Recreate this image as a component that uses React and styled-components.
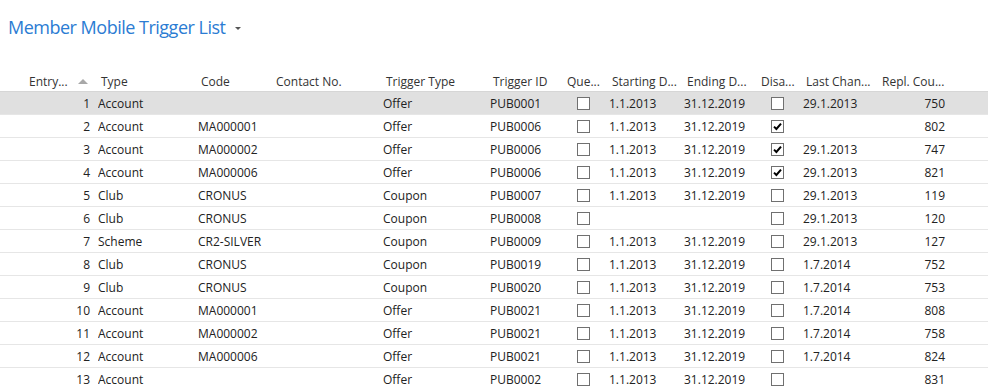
import styled, { createGlobalStyle } from "styled-components";

const GlobalStyle = createGlobalStyle`
  body {
    margin: 0;
    background: #fff;
    font-family: "Open Sans", "Noto Sans", sans-serif;
    color: #222;
  }
`;

const COLUMNS = "98px 100px 75px 110px 107px 74px 45px 75px 74px 45px 76px 70px 1fr";

const rows = [
  [1, "Account", "", "Offer", "PUB0001", "1.1.2013", "31.12.2019", false, "29.1.2013", 750],
  [2, "Account", "MA000001", "Offer", "PUB0006", "1.1.2013", "31.12.2019", true, "", 802],
  [3, "Account", "MA000002", "Offer", "PUB0006", "1.1.2013", "31.12.2019", true, "29.1.2013", 747],
  [4, "Account", "MA000006", "Offer", "PUB0006", "1.1.2013", "31.12.2019", true, "29.1.2013", 821],
  [5, "Club", "CRONUS", "Coupon", "PUB0007", "1.1.2013", "31.12.2019", false, "29.1.2013", 119],
  [6, "Club", "CRONUS", "Coupon", "PUB0008", "", "", false, "29.1.2013", 120],
  [7, "Scheme", "CR2-SILVER", "Coupon", "PUB0009", "1.1.2013", "31.12.2019", false, "29.1.2013", 127],
  [8, "Club", "CRONUS", "Coupon", "PUB0019", "1.1.2013", "31.12.2019", false, "1.7.2014", 752],
  [9, "Club", "CRONUS", "Coupon", "PUB0020", "1.1.2013", "31.12.2019", false, "1.7.2014", 753],
  [10, "Account", "MA000001", "Offer", "PUB0021", "1.1.2013", "31.12.2019", false, "1.7.2014", 808],
  [11, "Account", "MA000002", "Offer", "PUB0021", "1.1.2013", "31.12.2019", false, "1.7.2014", 758],
  [12, "Account", "MA000006", "Offer", "PUB0021", "1.1.2013", "31.12.2019", false, "1.7.2014", 824],
  [13, "Account", "", "Offer", "PUB0002", "1.1.2013", "31.12.2019", false, "", 831],
];

const Page = styled.main`
  padding-top: 14px;
`;

const TitleBar = styled.div`
  display: flex;
  align-items: center;
  gap: 10px;
  padding-left: 8px;
  height: 26px;
`;

const Title = styled.h1`
  margin: 0;
  font-size: 18px;
  letter-spacing: -0.5px;
  font-weight: 400;
  color: #2b7cd3;
  line-height: 26px;
`;

const Caret = styled.span`
  width: 0;
  height: 0;
  border-left: 3px solid transparent;
  border-right: 3px solid transparent;
  border-top: 3px solid #555;
  margin-top: 2px;
`;

const Grid = styled.div`
  margin-top: 30px;
  font-size: 12px;
`;

const HeaderRow = styled.div`
  display: grid;
  grid-template-columns: ${COLUMNS};
  height: 22px;
  padding-top: 2px;
  box-sizing: border-box;
  align-items: center;
  border-bottom: 1px solid #d6d6d6;
  color: #333;
`;

const HeadCell = styled.div`
  padding-left: 3px;
  white-space: nowrap;
  overflow: hidden;
`;

const EntryHead = styled.div`
  display: flex;
  align-items: center;
  padding-left: 29px;
  gap: 10px;
`;

const SortArrow = styled.span`
  width: 0;
  height: 0;
  border-left: 5px solid transparent;
  border-right: 5px solid transparent;
  border-bottom: 5px solid #a8a8a8;
`;

const Row = styled.div`
  display: grid;
  grid-template-columns: ${COLUMNS};
  height: 22px;
  align-items: center;
  border-bottom: 1px solid #e6e6e6;
  background: ${(p) => (p.$selected ? "#e0e0e0" : "#fff")};
`;

const Cell = styled.div`
  white-space: nowrap;
  overflow: hidden;
  text-align: ${(p) => (p.$right ? "right" : "left")};
  padding-right: ${(p) => p.$pr || "0"};
`;

const BoxCell = styled.div`
  display: flex;
  align-items: center;
  padding-left: 13px;
`;

const Box = styled.span`
  width: 13px;
  height: 13px;
  box-sizing: border-box;
  border: 1px solid #707070;
  background: #fff;
  display: flex;
  align-items: center;
  justify-content: center;
`;

const Check = () => (
  <svg width="9" height="9" viewBox="0 0 9 9">
    <path d="M1 4.6 L3.4 7 L8 1.6" fill="none" stroke="#000" strokeWidth="2" />
  </svg>
);

const CheckBox = ({ checked }) => (
  <BoxCell>
    <Box>{checked && <Check />}</Box>
  </BoxCell>
);

const headers = [
  "Type",
  "Code",
  "Contact No.",
  "Trigger Type",
  "Trigger ID",
  "Que...",
  "Starting D...",
  "Ending D...",
  "Disa...",
  "Last Chan...",
  "Repl. Cou...",
];

const App = () => (
  <>
    <GlobalStyle />
    <Page>
      <TitleBar>
        <Title>Member Mobile Trigger List</Title>
        <Caret />
      </TitleBar>
      <Grid>
        <HeaderRow>
          <EntryHead>
            Entry...
            <SortArrow />
          </EntryHead>
          {headers.map((h) => (
            <HeadCell key={h}>{h}</HeadCell>
          ))}
        </HeaderRow>
        {rows.map(([no, type, code, tType, tId, start, end, dis, last, repl]) => (
          <Row key={no} $selected={no === 1}>
            <Cell $right $pr="8px">{no}</Cell>
            <Cell>{type}</Cell>
            <Cell>{code}</Cell>
            <Cell></Cell>
            <Cell>{tType}</Cell>
            <Cell>{tId}</Cell>
            <CheckBox checked={false} />
            <Cell>{start}</Cell>
            <Cell>{end}</Cell>
            <CheckBox checked={dis} />
            <Cell>{last}</Cell>
            <Cell $right $pr="4px">{repl}</Cell>
            <Cell></Cell>
          </Row>
        ))}
      </Grid>
    </Page>
  </>
);

export default App;
